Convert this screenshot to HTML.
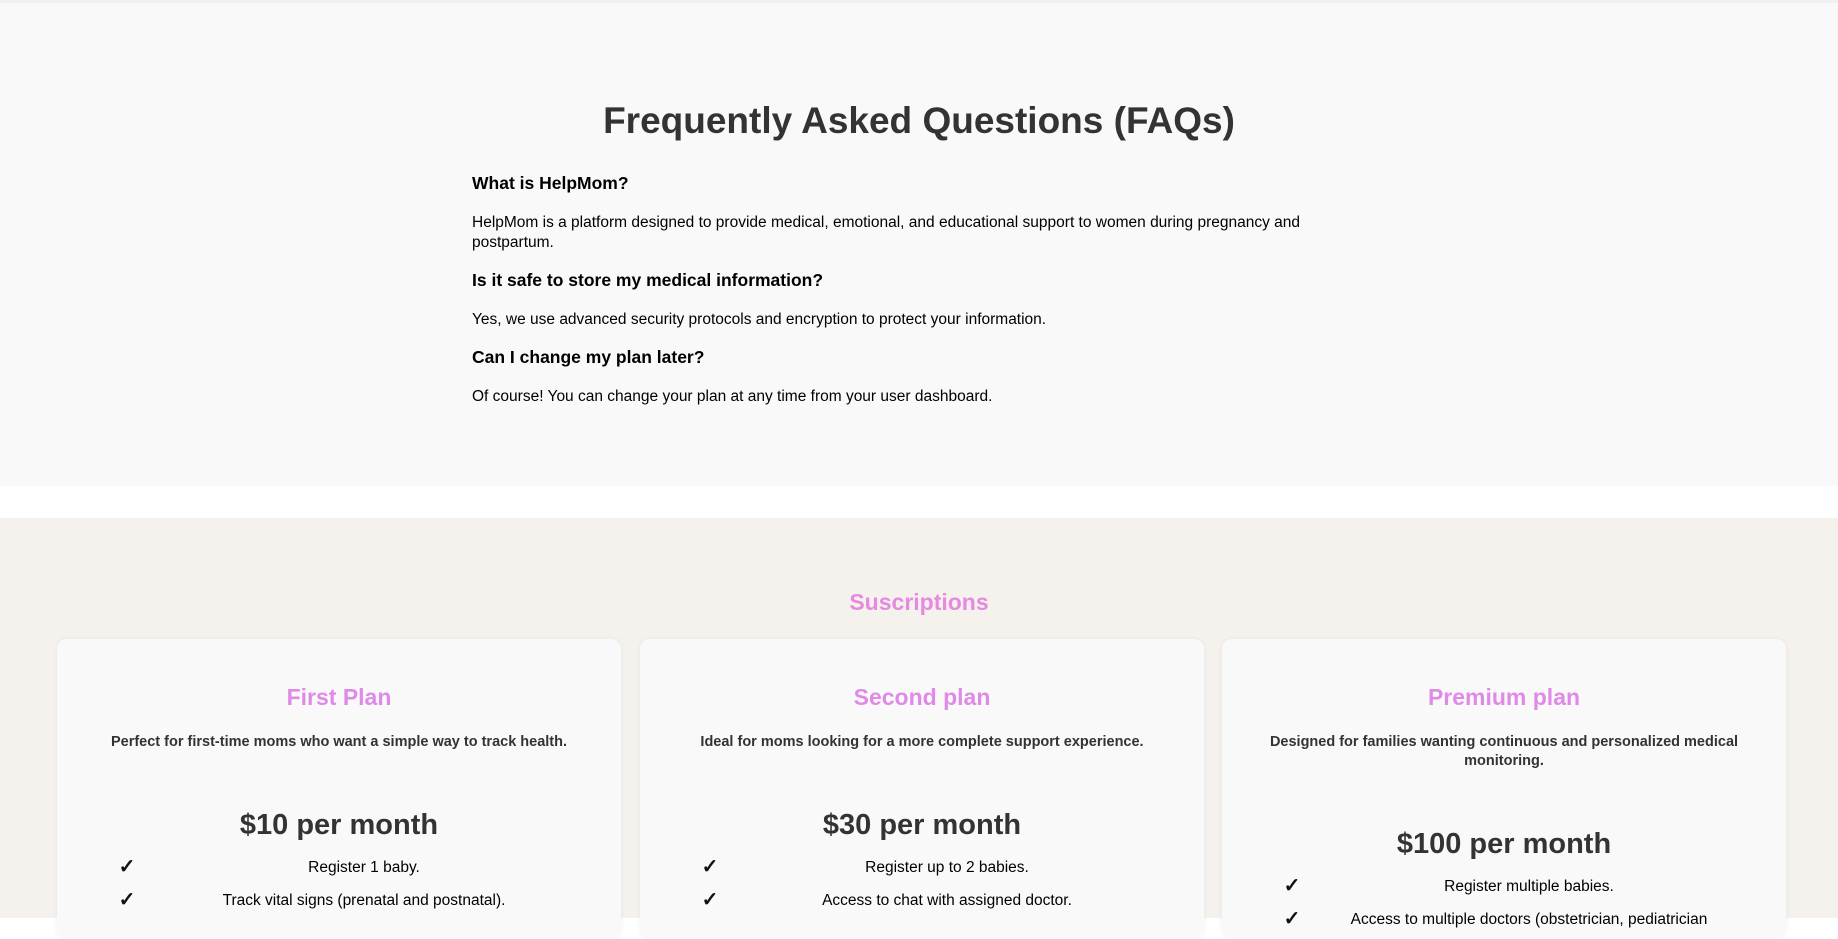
<!DOCTYPE html>
<html><head><meta charset="utf-8"><style>
*{box-sizing:border-box;margin:0;padding:0}
body{width:1838px;height:918px;overflow:hidden;font-family:"Liberation Sans",sans-serif;background:#fff;color:#000;position:relative}
.faq{background:#f9f9f9;height:486px;padding-top:95px;border-top:3px solid #f1f1f1}
.faq h1{text-align:center;font-size:37px;color:#333;font-weight:bold;line-height:46px}
.faq .in{width:860px;margin:28px 0 0 472px}
.faq h3{font-size:17.5px;font-weight:bold;margin:0 0 19px;line-height:22px}
.faq p{font-size:15.5px;line-height:20px;margin-bottom:16px}
.sub{position:absolute;top:518px;left:0;width:1838px;height:400px;background:#f5f2ee}
.card{position:absolute;top:639px;width:564px;height:300px;background:#f9f9f9;border-radius:10px;box-shadow:0 0 6px rgba(0,0,0,.06);text-align:center;color:#333}
.card h3{margin-top:44px;font-size:23px;color:#e08ae8;font-weight:bold;line-height:28px}
.card .d{margin:22px 30px 0;font-size:14.5px;font-weight:bold;line-height:19px;height:74px}
.card .pr{font-size:29px;font-weight:bold;line-height:36px}
.card ul{list-style:none;margin-top:8px}
.card li{display:flex;font-size:15.5px;line-height:33px;color:#000;padding-left:60px;padding-right:30px}
.card li b{font-weight:bold;width:20px;color:#111;font-size:20px}
.card li span{flex:1;text-align:center;white-space:nowrap;overflow:hidden}
</style></head><body>
<div class="faq">
<h1>Frequently Asked Questions (FAQs)</h1>
<div class="in">
<h3>What is HelpMom?</h3>
<p>HelpMom is a platform designed to provide medical, emotional, and educational support to women during pregnancy and postpartum.</p>
<h3>Is it safe to store my medical information?</h3>
<p>Yes, we use advanced security protocols and encryption to protect your information.</p>
<h3>Can I change my plan later?</h3>
<p>Of course! You can change your plan at any time from your user dashboard.</p>
</div></div>
<div class="sub"></div>
<h2 style="position:absolute;top:589px;width:100%;text-align:center;color:#e58ae0;font-size:23px;font-weight:bold">Suscriptions</h2>
<div class="card" style="left:57px"><h3>First Plan</h3><div class="d">Perfect for first-time moms who want a simple way to track health.</div><div class="pr">$10 per month</div><ul><li><b>✓</b><span>Register 1 baby.</span></li><li><b>✓</b><span>Track vital signs (prenatal and postnatal).</span></li></ul></div>
<div class="card" style="left:640px"><h3>Second plan</h3><div class="d">Ideal for moms looking for a more complete support experience.</div><div class="pr">$30 per month</div><ul><li><b>✓</b><span>Register up to 2 babies.</span></li><li><b>✓</b><span>Access to chat with assigned doctor.</span></li></ul></div>
<div class="card" style="left:1222px"><h3>Premium plan</h3><div class="d" style="height:93px">Designed for families wanting continuous and personalized medical monitoring.</div><div class="pr">$100 per month</div><ul><li><b>✓</b><span>Register multiple babies.</span></li><li><b>✓</b><span>Access to multiple doctors (obstetrician, pediatrician</span></li></ul></div>
</body></html>
